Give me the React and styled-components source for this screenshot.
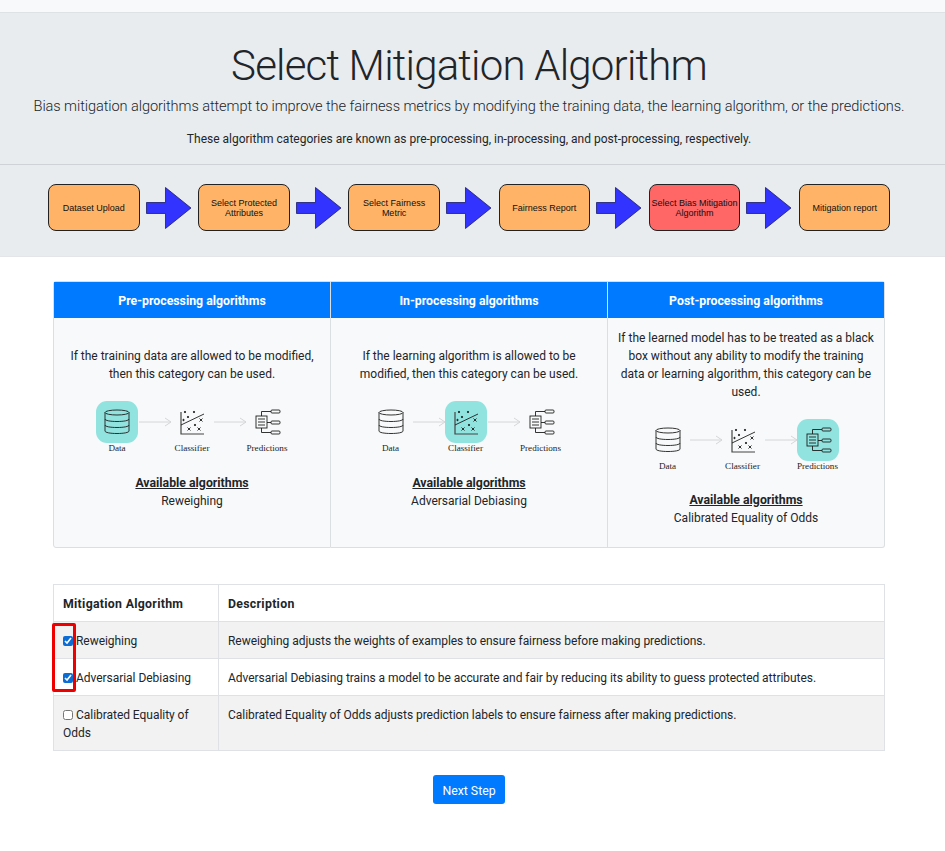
import React from "react";
import styled, { createGlobalStyle } from "styled-components";

const GlobalStyle = createGlobalStyle`
  html, body {
    margin: 0;
    padding: 0;
    background: #fff;
  }
  body {
    font-family: Roboto, "Open Sans", sans-serif;
    font-size: 12px;
    line-height: 18px;
    color: #212529;
  }
`;

const Page = styled.div`
  width: 945px;
  height: 851px;
  overflow: hidden;
  position: relative;
`;

const TopStrip = styled.div`
  height: 12px;
  background: #f8f9fa;
  border-bottom: 1px solid #dfe2e5;
`;

const Jumbotron = styled.header`
  height: 243px;
  background: #e9ecef;
  border-bottom: 1px solid #e3e5e8;
  text-align: center;
`;

const Intro = styled.div`
  padding-right: 7px;
`;

const Title = styled.h1`
  margin: 0;
  padding-top: 24px;
  font-size: 42px;
  line-height: 58px;
  font-weight: 300;
  letter-spacing: -0.8px;
`;

const Lead = styled.p`
  margin: 0;
  font-size: 14.6px;
  line-height: 22px;
  font-weight: 300;
  letter-spacing: -0.09px;
`;

const Note = styled.p`
  margin: 0;
  padding-top: 13px;
  line-height: 18px;
`;

const Rule = styled.hr`
  margin: 16px 0 0;
  border: 0;
  border-top: 1px solid #cfd3d7;
`;

const Flow = styled.div`
  display: flex;
  align-items: center;
  padding: 19px 0 0 48px;
`;

const Step = styled.div`
  box-sizing: border-box;
  width: 91.5px;
  height: 47px;
  padding-top: 1px;
  flex: none;
  display: flex;
  align-items: center;
  justify-content: center;
  text-align: center;
  white-space: pre-line;
  background: ${(props) => (props.$current ? "#ff6666" : "#ffb366")};
  border: 1px solid #222;
  border-radius: 8px;
  font-family: "Liberation Sans", Arial, sans-serif;
  font-size: 9px;
  line-height: 10.5px;
  color: #111;
`;

const ArrowWrap = styled.svg`
  display: block;
  width: 58.7px;
  height: 44px;
  flex: none;
`;

const FlowArrow = () => (
  <ArrowWrap viewBox="0 0 58.700 44">
    <path
      d="M6.500 16.500H25.500V1.500L51 22L25.500 42.500V27.500H6.500Z"
      fill="#3333ff"
      stroke="#1c1c66"
      strokeWidth="0.8"
    />
  </ArrowWrap>
);

const Main = styled.main`
  padding: 24px 60px 0 53px;
`;

const CardGroup = styled.section`
  display: grid;
  grid-template-columns: 278px 277px 277px;
  width: 832px;
  height: 267px;
  box-sizing: border-box;
`;

const Card = styled.article`
  display: flex;
  flex-direction: column;
  box-sizing: border-box;
  background: #f8f9fa;
  border: 1px solid #dcdfe2;
  border-left-width: ${(props) => (props.$first ? "1px" : "0")};
  border-radius: ${(props) =>
    props.$first ? "3px 0 0 3px" : props.$last ? "0 3px 3px 0" : "0"};
`;

const CardHeader = styled.h2`
  margin: 0;
  height: 36px;
  line-height: 38px;
  background: #007bff;
  color: #fff;
  font-size: 12.3px;
  font-weight: 700;
  text-align: center;
`;

const CardBody = styled.div`
  padding: ${(props) => (props.$tall ? "11px" : "29px")} 9px 0;
  text-align: center;
`;

const CardText = styled.p`
  margin: 0;
`;

const Pipeline = styled.div`
  display: flex;
  justify-content: center;
  align-items: flex-start;
  margin-top: 18px;
  padding-right: ${(props) => (props.$shifted ? "7px" : "0")};
  height: 60px;
`;

const Node = styled.div`
  width: 42px;
  display: flex;
  flex-direction: column;
  align-items: center;
  flex: none;
`;

const Tile = styled.div`
  width: 42px;
  height: 42px;
  border-radius: 11px;
  display: flex;
  align-items: center;
  justify-content: center;
  background: ${(props) => (props.$active ? "#91e3df" : "transparent")};
`;

const NodeLabel = styled.span`
  font-family: "Liberation Serif", "Times New Roman", serif;
  font-size: 9.1px;
  line-height: 11px;
  white-space: nowrap;
  color: #222;
`;

const LinkArrow = styled.svg`
  display: block;
  width: 33px;
  height: 42px;
  flex: none;
`;

const Connector = () => (
  <LinkArrow viewBox="0 0 33 42">
    <path
      d="M1 21H33M27 17L33 21L27 25"
      fill="none"
      stroke="#d4d6d8"
      strokeWidth="1"
    />
  </LinkArrow>
);

const Glyph = styled.svg`
  display: block;
  width: 28px;
  height: 28px;
  fill: none;
  stroke: #1d1d1d;
  stroke-width: 0.9;
`;

const DataIcon = () => (
  <Glyph viewBox="0 0 28 28">
    <ellipse cx="14" cy="4.500" rx="12" ry="2.500" />
    <path d="M2 4.500V11C2 12.500 7 13.500 14 13.500S26 12.500 26 11V4.500" />
    <path d="M2 11V17C2 18.500 7 19.500 14 19.500S26 18.500 26 17V11" />
    <path d="M2 17V23C2 24.500 7 25.500 14 25.500S26 24.500 26 23V17" />
  </Glyph>
);

const ClassifierIcon = () => (
  <Glyph viewBox="0 0 28 28">
    <path d="M3 4V26H26" strokeWidth="1.200" stroke="#444" />
    <path d="M3 17L26 6" />
    <circle cx="5.500" cy="12" r="0.700" fill="#111" />
    <circle cx="7" cy="4" r="0.700" fill="#111" />
    <circle cx="16" cy="4" r="0.700" fill="#111" />
    <circle cx="10" cy="9" r="0.700" fill="#111" />
    <circle cx="17" cy="17" r="0.700" fill="#111" />
    <path d="M21.500 10.500L24.500 13.500M24.500 10.500L21.500 13.500M9.500 19.500L12.500 22.500M12.500 19.500L9.500 22.500M19.500 19.500L22.500 22.500M22.500 19.500L19.500 22.500" />
  </Glyph>
);

const PredictionsIcon = () => (
  <Glyph viewBox="0 0 28 28">
    <rect x="3" y="8" width="11" height="12" />
    <path d="M5 11H12M5 14H12M5 17H12" />
    <path d="M8.500 8V3.500H18M14 14.500H18M8.500 20V24.500H18" />
    <rect x="18" y="2" width="9" height="3" rx="1" />
    <rect x="18" y="13" width="9" height="3" rx="1" />
    <rect x="18" y="23" width="9" height="3" rx="1" />
  </Glyph>
);

const AvailableTitle = styled.h3`
  margin: ${(props) => (props.$tall ? "12px" : "13px")} 0 0;
  font-size: 12.3px;
  line-height: 18px;
  font-weight: 700;
  text-decoration: underline;
`;

const AlgorithmTable = styled.table`
  margin-top: 36px;
  width: 832px;
  border-collapse: collapse;
  table-layout: fixed;
`;

const HeadCell = styled.th`
  border: 1px solid #dee2e6;
  padding: 10px 9px 8px;
  height: 18px;
  text-align: left;
  font-size: 12.3px;
  font-weight: 700;
  letter-spacing: 0.3px;
  vertical-align: top;
`;

const Row = styled.tr`
  background: ${(props) => (props.$striped ? "#f2f2f2" : "#fff")};
`;

const Cell = styled.td`
  border: 1px solid #dee2e6;
  padding: 10px 9px 8px;
  vertical-align: top;
  letter-spacing: -0.04px;
`;

const Check = styled.input`
  margin: 0 3px 0 0;
  width: 10px;
  height: 10px;
  vertical-align: -1px;
  accent-color: #0b6cd6;
`;

const Actions = styled.div`
  display: flex;
  justify-content: center;
  margin-top: 24px;
`;

const NextButton = styled.button`
  width: 72px;
  height: 29px;
  padding: 2px 0 0;
  border: 0;
  border-radius: 3px;
  background: #007bff;
  color: #fff;
  font-family: inherit;
  font-size: 12.3px;
`;

const Highlight = styled.div`
  position: absolute;
  left: 52px;
  top: 623px;
  width: 24px;
  height: 69px;
  box-sizing: border-box;
  border: 3px solid #ee0000;
  border-radius: 2px;
  pointer-events: none;
`;

const steps = [
  { label: "Dataset Upload" },
  { label: "Select Protected\nAttributes" },
  { label: "Select Fairness\nMetric" },
  { label: "Fairness Report" },
  { label: "Select Bias Mitigation\nAlgorithm", current: true },
  { label: "Mitigation report" },
];

const categories = [
  {
    title: "Pre-processing algorithms",
    text: "If the training data are allowed to be modified, then this category can be used.",
    active: 0,
    algorithm: "Reweighing",
  },
  {
    title: "In-processing algorithms",
    text: "If the learning algorithm is allowed to be modified, then this category can be used.",
    active: 1,
    algorithm: "Adversarial Debiasing",
  },
  {
    title: "Post-processing algorithms",
    text: "If the learned model has to be treated as a black box without any ability to modify the training data or learning algorithm, this category can be used.",
    active: 2,
    algorithm: "Calibrated Equality of Odds",
    tall: true,
  },
];

const nodes = [
  { label: "Data", Icon: DataIcon },
  { label: "Classifier", Icon: ClassifierIcon },
  { label: "Predictions", Icon: PredictionsIcon },
];

const algorithms = [
  {
    name: "Reweighing",
    checked: true,
    description:
      "Reweighing adjusts the weights of examples to ensure fairness before making predictions.",
  },
  {
    name: "Adversarial Debiasing",
    checked: true,
    description:
      "Adversarial Debiasing trains a model to be accurate and fair by reducing its ability to guess protected attributes.",
  },
  {
    name: "Calibrated Equality of Odds",
    checked: false,
    description:
      "Calibrated Equality of Odds adjusts prediction labels to ensure fairness after making predictions.",
  },
];

const App = () => (
  <Page>
    <GlobalStyle />
    <TopStrip />
    <Jumbotron>
      <Intro>
        <Title>Select Mitigation Algorithm</Title>
        <Lead>
          Bias mitigation algorithms attempt to improve the fairness metrics by modifying the
          training data, the learning algorithm, or the predictions.
        </Lead>
        <Note>
          These algorithm categories are known as pre-processing, in-processing, and
          post-processing, respectively.
        </Note>
      </Intro>
      <Rule />
      <Flow>
        {steps.map((step, i) => (
          <React.Fragment key={step.label}>
            <Step $current={step.current}>{step.label}</Step>
            {i < steps.length - 1 && <FlowArrow />}
          </React.Fragment>
        ))}
      </Flow>
    </Jumbotron>
    <Main>
      <CardGroup>
        {categories.map((cat, c) => (
          <Card key={cat.title} $first={c === 0} $last={c === 2}>
            <CardHeader>{cat.title}</CardHeader>
            <CardBody $tall={cat.tall}>
              <CardText>{cat.text}</CardText>
              <Pipeline $shifted={c > 0}>
                {nodes.map(({ label, Icon }, n) => (
                  <React.Fragment key={label}>
                    <Node>
                      <Tile $active={cat.active === n}>
                        <Icon />
                      </Tile>
                      <NodeLabel>{label}</NodeLabel>
                    </Node>
                    {n < 2 && <Connector />}
                  </React.Fragment>
                ))}
              </Pipeline>
              <AvailableTitle $tall={cat.tall}>Available algorithms</AvailableTitle>
              <CardText>{cat.algorithm}</CardText>
            </CardBody>
          </Card>
        ))}
      </CardGroup>
      <AlgorithmTable>
        <colgroup>
          <col width="165" />
          <col />
        </colgroup>
        <thead>
          <tr>
            <HeadCell>Mitigation Algorithm</HeadCell>
            <HeadCell>Description</HeadCell>
          </tr>
        </thead>
        <tbody>
          {algorithms.map((algo, i) => (
            <Row key={algo.name} $striped={i % 2 === 0}>
              <Cell>
                <Check type="checkbox" defaultChecked={algo.checked} />
                {algo.name}
              </Cell>
              <Cell>{algo.description}</Cell>
            </Row>
          ))}
        </tbody>
      </AlgorithmTable>
      <Actions>
        <NextButton type="button">Next Step</NextButton>
      </Actions>
    </Main>
    <Highlight />
  </Page>
);

export default App;
